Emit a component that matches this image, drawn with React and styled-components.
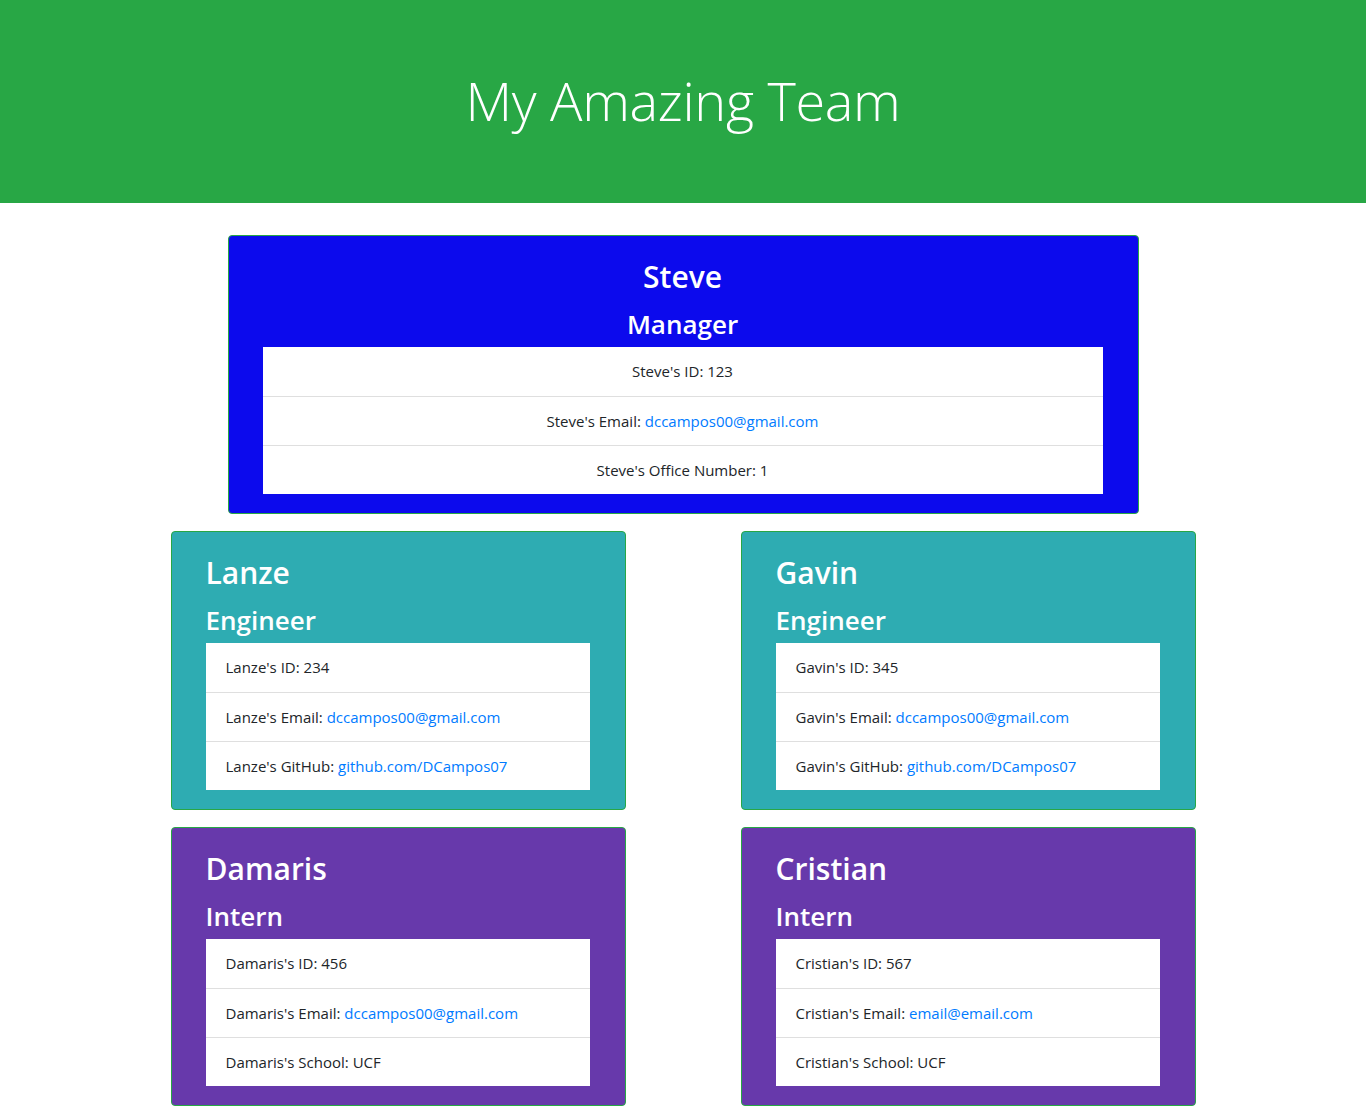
import React from 'react';
import styled, { createGlobalStyle } from 'styled-components';

const GlobalStyle = createGlobalStyle`
	body {
		margin: 0;
		background: #fff;
		font-family: "Open Sans", "Noto Sans", sans-serif;
		font-size: 15px;
		color: #212529;
	}
`;

const team = {
	manager: { name: 'Steve', id: 123, email: 'dccampos00@gmail.com', office: 1 },
	rows: [
		[
			{ name: 'Lanze', role: 'Engineer', id: 234, email: 'dccampos00@gmail.com', github: 'DCampos07' },
			{ name: 'Gavin', role: 'Engineer', id: 345, email: 'dccampos00@gmail.com', github: 'DCampos07' },
		],
		[
			{ name: 'Damaris', role: 'Intern', id: 456, email: 'dccampos00@gmail.com', school: 'UCF' },
			{ name: 'Cristian', role: 'Intern', id: 567, email: 'email@email.com', school: 'UCF' },
		],
	],
};

const colors = {
	Manager: '#0c0aed',
	Engineer: '#2eacb2',
	Intern: '#6739ab',
};

function Member({ person, role, centered, wide }) {
	return (
		<Card bg={colors[role]} wide={wide}>
			<Name centered={centered}>{person.name}</Name>
			<Role centered={centered}>{role}</Role>
			<List>
				<Item centered={centered}>{person.name}'s ID: {person.id}</Item>
				<Item centered={centered}>
					{person.name}'s Email: <A href={'mailto:' + person.email}>{person.email}</A>
				</Item>
				{role === 'Manager' && <Item centered={centered}>{person.name}'s Office Number: {person.office}</Item>}
				{role === 'Engineer' && (
					<Item centered={centered}>
						{person.name}'s GitHub: <A href="#">github.com/{person.github}</A>
					</Item>
				)}
				{role === 'Intern' && <Item centered={centered}>{person.name}'s School: {person.school}</Item>}
			</List>
		</Card>
	);
}

export default function App() {
	return (
		<Page>
			<GlobalStyle />
			<Jumbotron>
				<Title>My Amazing Team</Title>
			</Jumbotron>
			<Main>
				<Member person={team.manager} role="Manager" centered wide />
				<Grid>
					{team.rows.flat().map((p) => (
						<Member key={p.name} person={p} role={p.role} />
					))}
				</Grid>
			</Main>
		</Page>
	);
}

const Page = styled.div`
	padding-bottom: 17px;
`;

const Jumbotron = styled.header`
	background-color: #28a745;
	padding: 67px 32px 61px;
	margin-bottom: 32px;
	text-align: center;
`;

const Title = styled.h1`
	margin: 0 0 8px;
	font-size: 54px;
	font-weight: 300;
	line-height: 67px;
	color: #fff;
	letter-spacing: -0.3px;
`;

const Main = styled.main`
	display: flex;
	flex-direction: column;
	align-items: center;
	gap: 17px;
`;

const Grid = styled.div`
	display: grid;
	grid-template-columns: 455px 455px;
	column-gap: 115px;
	row-gap: 17px;
`;

const Card = styled.section`
	box-sizing: border-box;
	width: ${(p) => (p.wide ? '911px' : '455px')};
	background-color: ${(p) => p.bg};
	border: 1px solid #28a745;
	border-radius: 4px;
	padding: 22px 35px 19px 34px;
	color: #fff;
`;

const Name = styled.h2`
	margin: 0 0 11px;
	font-size: 30px;
	font-weight: 600;
	line-height: 38px;
	text-align: ${(p) => (p.centered ? 'center' : 'left')};
`;

const Role = styled.h3`
	margin: 0 0 6px;
	font-size: 26px;
	font-weight: 600;
	line-height: 34px;
	text-align: ${(p) => (p.centered ? 'center' : 'left')};
`;

const List = styled.ul`
	list-style: none;
	margin: 0;
	padding: 0;
	background: #fff;
	color: #212529;
`;

const Item = styled.li`
	padding: 12px 20px;
	line-height: 24px;
	border-top: 1px solid rgba(0, 0, 0, 0.125);
	text-align: ${(p) => (p.centered ? 'center' : 'left')};
	&:first-child {
		border-top: none;
		padding-bottom: 13px;
	}
`;

const A = styled.a`
	color: #007bff;
	text-decoration: none;
`;
